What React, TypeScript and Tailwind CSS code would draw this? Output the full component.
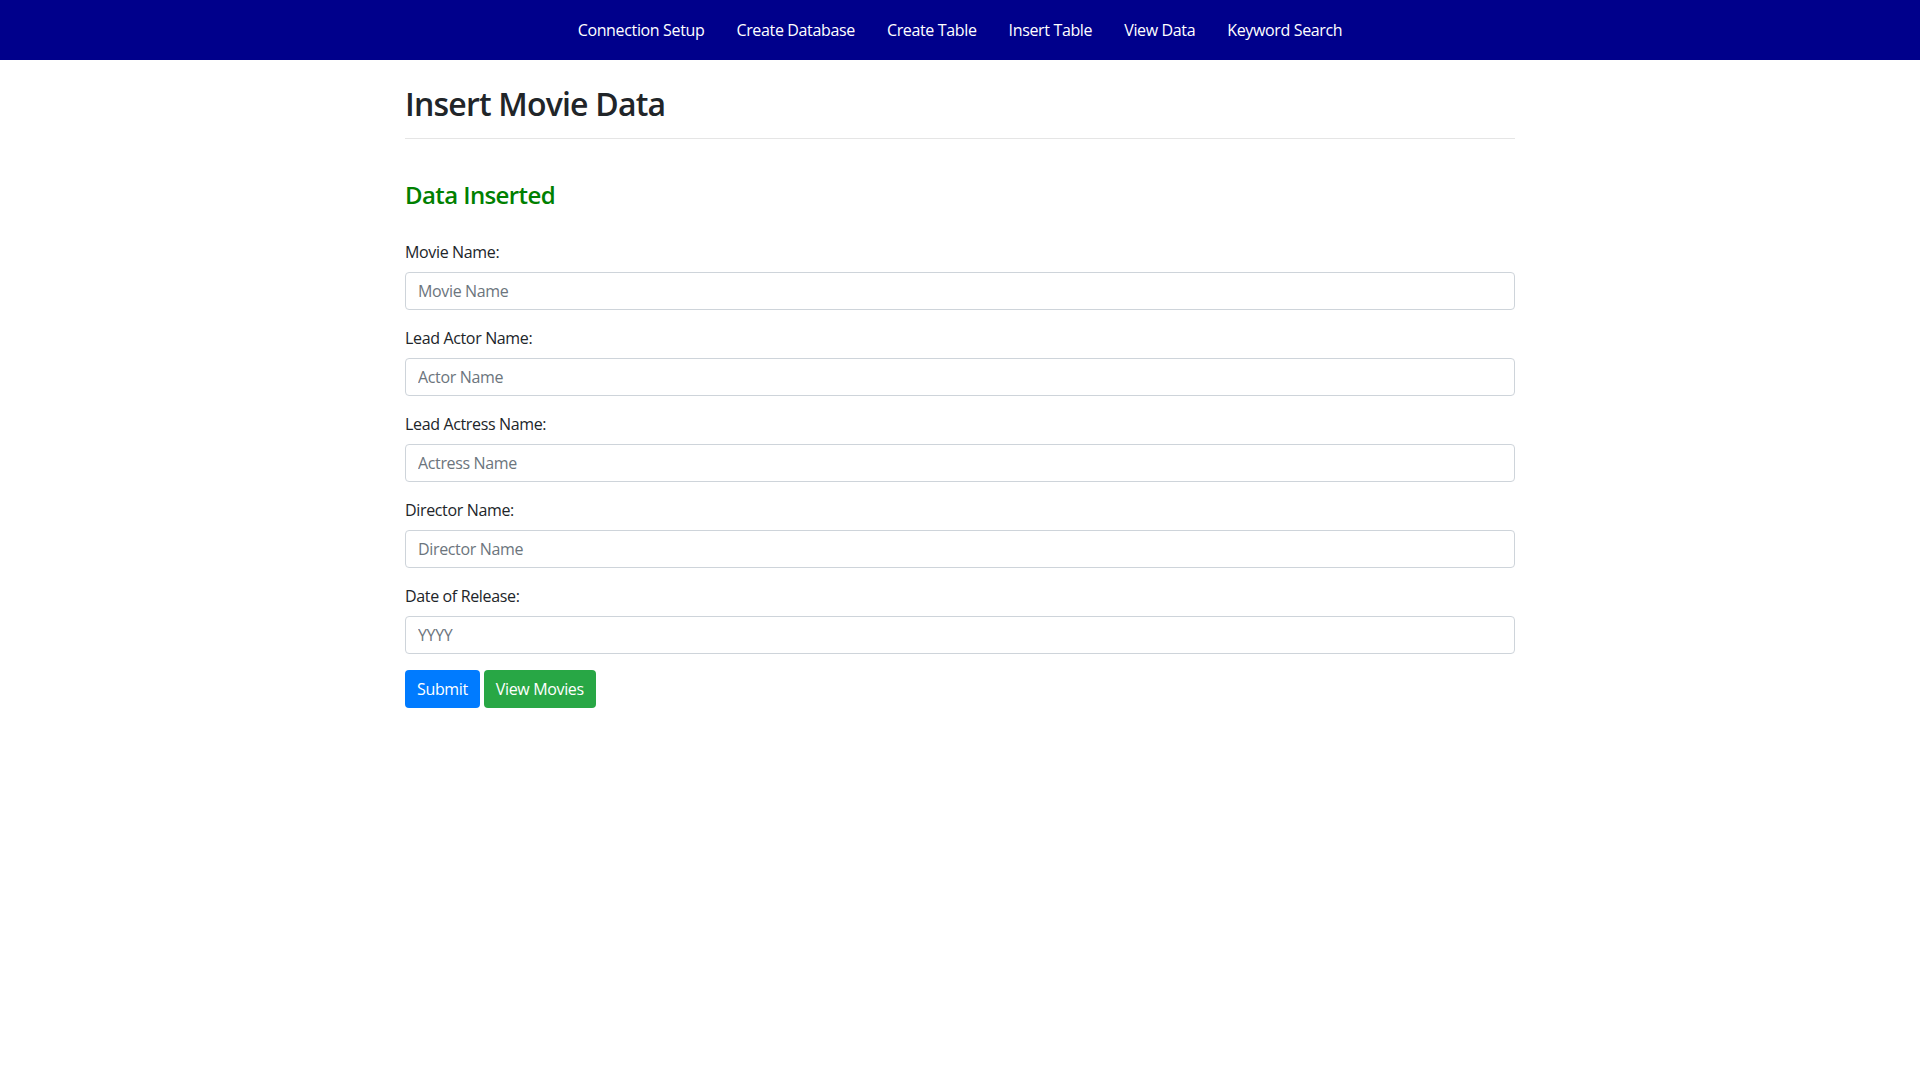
export default function App() {
  const links = [
    "Connection Setup",
    "Create Database",
    "Create Table",
    "Insert Table",
    "View Data",
    "Keyword Search",
  ];

  const fields = [
    { label: "Movie Name:", placeholder: "Movie Name" },
    { label: "Lead Actor Name:", placeholder: "Actor Name" },
    { label: "Lead Actress Name:", placeholder: "Actress Name" },
    { label: "Director Name:", placeholder: "Director Name" },
    { label: "Date of Release:", placeholder: "YYYY" },
  ];

  return (
    <div className="min-h-screen bg-white text-[#212529] font-['Open_Sans',sans-serif] text-[16px] tracking-[-0.35px]">
      {/* Navbar */}
      <nav className="h-[60px] bg-[#00008b] flex items-center justify-center">
        {links.map((l) => (
          <a key={l} href="#" className="px-4 text-white leading-6">
            {l}
          </a>
        ))}
      </nav>

      <div className="w-[1110px] mx-auto">
        <h2 className="mt-[25px] text-[32px] font-semibold leading-[38px] tracking-[-0.8px]">
          Insert Movie Data
        </h2>
        <hr className="mt-[15px] border-0 border-t border-[#e5e5e5]" />

        <h3 className="mt-[39px] text-[24px] font-semibold leading-[34px] text-[#008000] tracking-[-0.6px]">
          Data Inserted
        </h3>

        <form className="mt-[28px]">
          {fields.map((f) => (
            <div key={f.label} className="mb-4">
              <label className="block mb-2 leading-6">{f.label}</label>
              <input
                type="text"
                placeholder={f.placeholder}
                className="block w-full h-[38px] px-3 border border-[#ced4da] rounded-[4px] placeholder:text-[#6c757d] outline-none"
              />
            </div>
          ))}
          <div className="flex gap-1">
            <button
              type="button"
              className="h-[38px] px-3 rounded-[4px] bg-[#007bff] text-white"
            >
              Submit
            </button>
            <button
              type="button"
              className="h-[38px] px-3 rounded-[4px] bg-[#28a745] text-white"
            >
              View Movies
            </button>
          </div>
        </form>
      </div>
    </div>
  );
}
